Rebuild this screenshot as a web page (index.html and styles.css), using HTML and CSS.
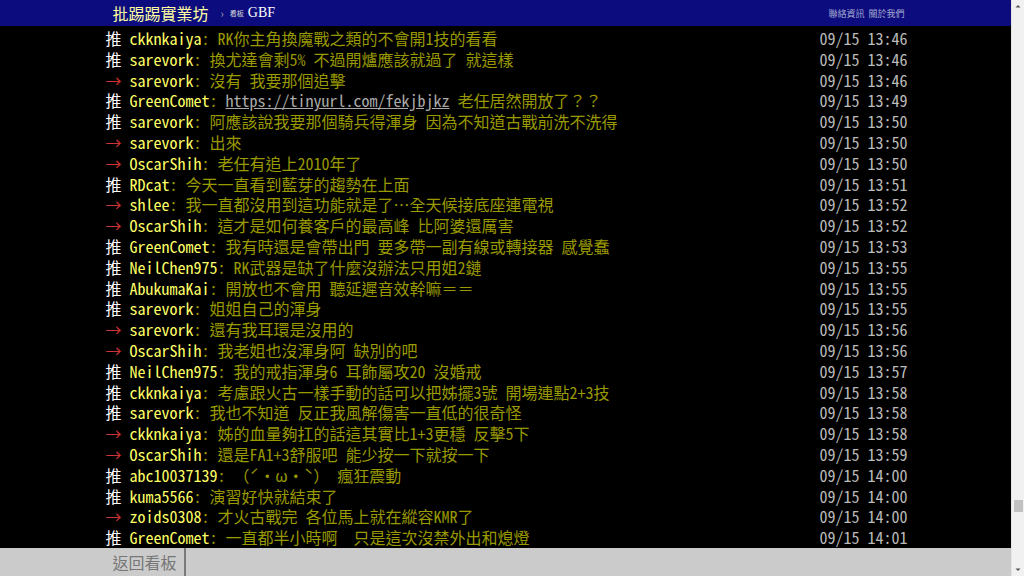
FILE: index.html
```html
<!DOCTYPE html>
<html lang="zh-tw">
<head>
    <meta charset="UTF-8">
    <meta name="viewport" content="width=device-width, initial-scale=1.0">
    <title>批踢踢實業坊 › 看板 GBF</title>
    <link rel="stylesheet" href="styles.css">
</head>
<body>
    <div class="window">
        <div class="page">
            <div class="topbar">
                <div class="topbar-inner">
                    <a class="logo" href="#">批踢踢實業坊</a>
                    <span class="crumb">›</span>
                    <span class="board-label">看板</span>
                    <a class="board" href="#">GBF</a>
                    <span class="spacer"></span>
                    <a class="top-link" href="#">聯絡資訊</a>
                    <a class="top-link" href="#">關於我們</a>
                </div>
            </div>

            <div class="main">
                <div class="bbs-content">
                    <div class="push"><span class="push-tag hl">推 </span><span class="push-userid">ckknkaiya</span><span class="push-content">: RK你主角換魔戰之類的不會開1技的看看</span><span class="push-date">09/15 13:46</span></div>
                    <div class="push"><span class="push-tag hl">推 </span><span class="push-userid">sarevork</span><span class="push-content">: 換尤達會剩5% 不過開爐應該就過了 就這樣</span><span class="push-date">09/15 13:46</span></div>
                    <div class="push"><span class="push-tag arrow">→ </span><span class="push-userid">sarevork</span><span class="push-content">: 沒有 我要那個追擊</span><span class="push-date">09/15 13:46</span></div>
                    <div class="push"><span class="push-tag hl">推 </span><span class="push-userid">GreenComet</span><span class="push-content">: <a class="link" href="#">https://tinyurl.com/fekjbjkz</a> 老任居然開放了？？</span><span class="push-date">09/15 13:49</span></div>
                    <div class="push"><span class="push-tag hl">推 </span><span class="push-userid">sarevork</span><span class="push-content">: 阿應該說我要那個騎兵得渾身 因為不知道古戰前洗不洗得</span><span class="push-date">09/15 13:50</span></div>
                    <div class="push"><span class="push-tag arrow">→ </span><span class="push-userid">sarevork</span><span class="push-content">: 出來</span><span class="push-date">09/15 13:50</span></div>
                    <div class="push"><span class="push-tag arrow">→ </span><span class="push-userid">OscarShih</span><span class="push-content">: 老任有追上2010年了</span><span class="push-date">09/15 13:50</span></div>
                    <div class="push"><span class="push-tag hl">推 </span><span class="push-userid">RDcat</span><span class="push-content">: 今天一直看到藍芽的趨勢在上面</span><span class="push-date">09/15 13:51</span></div>
                    <div class="push"><span class="push-tag arrow">→ </span><span class="push-userid">shlee</span><span class="push-content">: 我一直都沒用到這功能就是了…全天候接底座連電視</span><span class="push-date">09/15 13:52</span></div>
                    <div class="push"><span class="push-tag arrow">→ </span><span class="push-userid">OscarShih</span><span class="push-content">: 這才是如何養客戶的最高峰 比阿婆還厲害</span><span class="push-date">09/15 13:52</span></div>
                    <div class="push"><span class="push-tag hl">推 </span><span class="push-userid">GreenComet</span><span class="push-content">: 我有時還是會帶出門 要多帶一副有線或轉接器 感覺蠢</span><span class="push-date">09/15 13:53</span></div>
                    <div class="push"><span class="push-tag hl">推 </span><span class="push-userid">NeilChen975</span><span class="push-content">: RK武器是缺了什麼沒辦法只用姐2鏈</span><span class="push-date">09/15 13:55</span></div>
                    <div class="push"><span class="push-tag hl">推 </span><span class="push-userid">AbukumaKai</span><span class="push-content">: 開放也不會用 聽延遲音效幹嘛＝＝</span><span class="push-date">09/15 13:55</span></div>
                    <div class="push"><span class="push-tag hl">推 </span><span class="push-userid">sarevork</span><span class="push-content">: 姐姐自己的渾身</span><span class="push-date">09/15 13:55</span></div>
                    <div class="push"><span class="push-tag arrow">→ </span><span class="push-userid">sarevork</span><span class="push-content">: 還有我耳環是沒用的</span><span class="push-date">09/15 13:56</span></div>
                    <div class="push"><span class="push-tag arrow">→ </span><span class="push-userid">OscarShih</span><span class="push-content">: 我老姐也沒渾身阿 缺別的吧</span><span class="push-date">09/15 13:56</span></div>
                    <div class="push"><span class="push-tag hl">推 </span><span class="push-userid">NeilChen975</span><span class="push-content">: 我的戒指渾身6 耳飾屬攻20 沒婚戒</span><span class="push-date">09/15 13:57</span></div>
                    <div class="push"><span class="push-tag hl">推 </span><span class="push-userid">ckknkaiya</span><span class="push-content">: 考慮跟火古一樣手動的話可以把姊擺3號 開場連點2+3技</span><span class="push-date">09/15 13:58</span></div>
                    <div class="push"><span class="push-tag hl">推 </span><span class="push-userid">sarevork</span><span class="push-content">: 我也不知道 反正我風解傷害一直低的很奇怪</span><span class="push-date">09/15 13:58</span></div>
                    <div class="push"><span class="push-tag arrow">→ </span><span class="push-userid">ckknkaiya</span><span class="push-content">: 姊的血量夠扛的話這其實比1+3更穩 反擊5下</span><span class="push-date">09/15 13:58</span></div>
                    <div class="push"><span class="push-tag arrow">→ </span><span class="push-userid">OscarShih</span><span class="push-content">: 還是FA1+3舒服吧 能少按一下就按一下</span><span class="push-date">09/15 13:59</span></div>
                    <div class="push"><span class="push-tag hl">推 </span><span class="push-userid">abc10037139</span><span class="push-content">: （ˊ・ω・ˋ） 瘋狂震動</span><span class="push-date">09/15 14:00</span></div>
                    <div class="push"><span class="push-tag hl">推 </span><span class="push-userid">kuma5566</span><span class="push-content">: 演習好快就結束了</span><span class="push-date">09/15 14:00</span></div>
                    <div class="push"><span class="push-tag arrow">→ </span><span class="push-userid">zoids0308</span><span class="push-content">: 才火古戰完 各位馬上就在縱容KMR了</span><span class="push-date">09/15 14:00</span></div>
                    <div class="push"><span class="push-tag hl">推 </span><span class="push-userid">GreenComet</span><span class="push-content">: 一直都半小時啊  只是這次沒禁外出和熄燈</span><span class="push-date">09/15 14:01</span></div>
                </div>
            </div>

            <div class="footer">
                <div class="footer-inner">
                    <a class="back-link" href="#">返回看板</a>
                </div>
            </div>
        </div>

        <div class="scrollbar">
            <svg class="scroll-btn" width="12" height="12" viewBox="0 0 12 12"><polygon points="3.5,7.5 8.5,7.5 6,5" fill="#505050"/></svg>
            <div class="scroll-track">
                <div class="scroll-thumb"></div>
            </div>
            <svg class="scroll-btn" width="12" height="12" viewBox="0 0 12 12"><polygon points="3.5,4.5 8.5,4.5 6,7" fill="#505050"/></svg>
        </div>
    </div>
</body>
</html>
```

FILE: styles.css
```css
html, body {
    margin: 0;
    padding: 0;
    height: 100%;
    overflow: hidden;
}

body {
    background-color: #000;
    color: #bbb;
    font-family: "Noto Sans Mono CJK TC", "Noto Sans CJK TC", monospace;
    font-size: 16px;
}

a {
    color: inherit;
    text-decoration: none;
}

.window {
    display: flex;
    height: 576px;
}

.page {
    flex: 1;
    display: flex;
    flex-direction: column;
    min-width: 0;
}

/* top bar */
.topbar {
    height: 26px;
    background-color: #0c0c7e;
    flex-shrink: 0;
}

.topbar-inner {
    width: 800px;
    margin: 0 auto;
    height: 26px;
    padding: 0 1px 0 7px;
    box-sizing: border-box;
    display: flex;
    align-items: center;
}

.logo {
    color: #ffffa0;
    font-family: "Noto Sans CJK TC", sans-serif;
    font-size: 16px;
}

.crumb {
    color: #aaa;
    font-size: 11px;
    margin: 0 6px 0 12px;
}

.board-label {
    color: #ddd;
    font-family: "Noto Sans CJK TC", sans-serif;
    font-size: 7px;
    margin-right: 4px;
}

.board {
    color: #fff;
    font-family: "Liberation Serif", serif;
    font-size: 14px;
}

.spacer {
    flex: 1;
}

.top-link {
    color: #a5a8d0;
    font-family: "Noto Sans CJK TC", sans-serif;
    font-size: 9px;
    margin-left: 4px;
}

/* push list */
.main {
    flex: 1;
    overflow: hidden;
    display: flex;
    flex-direction: column;
    justify-content: flex-end;
}

.bbs-content {
    width: 800px;
    margin: 0 auto;
}

.push {
    display: flex;
    height: 20.8px;
    line-height: 20.8px;
    white-space: pre;
}

.push-tag.hl {
    color: #fff;
}

.push-tag.arrow {
    color: #c33;
}

.push-userid {
    color: #ff6;
}

.push-content {
    color: #990;
}

.link {
    color: #aaa;
    text-decoration: underline;
}

.push-date {
    margin-left: auto;
    margin-right: -2px;
    color: #bbb;
}

/* footer */
.footer {
    height: 28px;
    background-color: #cbcbcb;
    flex-shrink: 0;
}

.footer-inner {
    width: 800px;
    margin: 0 auto;
    height: 28px;
    display: flex;
}

.back-link {
    padding: 0 7px;
    line-height: 28px;
    color: #777;
    font-family: "Noto Sans CJK TC", sans-serif;
    border-right: 2px solid #7a7a7a;
}

/* scrollbar */
.scrollbar {
    width: 12px;
    background-color: #f1f1f1;
    border-left: 1px solid #e4e4e4;
    display: flex;
    flex-direction: column;
}

.scroll-btn {
    display: block;
    flex-shrink: 0;
}

.scroll-track {
    flex: 1;
    display: flex;
    flex-direction: column;
    justify-content: flex-end;
    padding-bottom: 52px;
}

.scroll-thumb {
    height: 12px;
    margin: 0 1px 0 2px;
    background-color: #c1c1c1;
}
```
